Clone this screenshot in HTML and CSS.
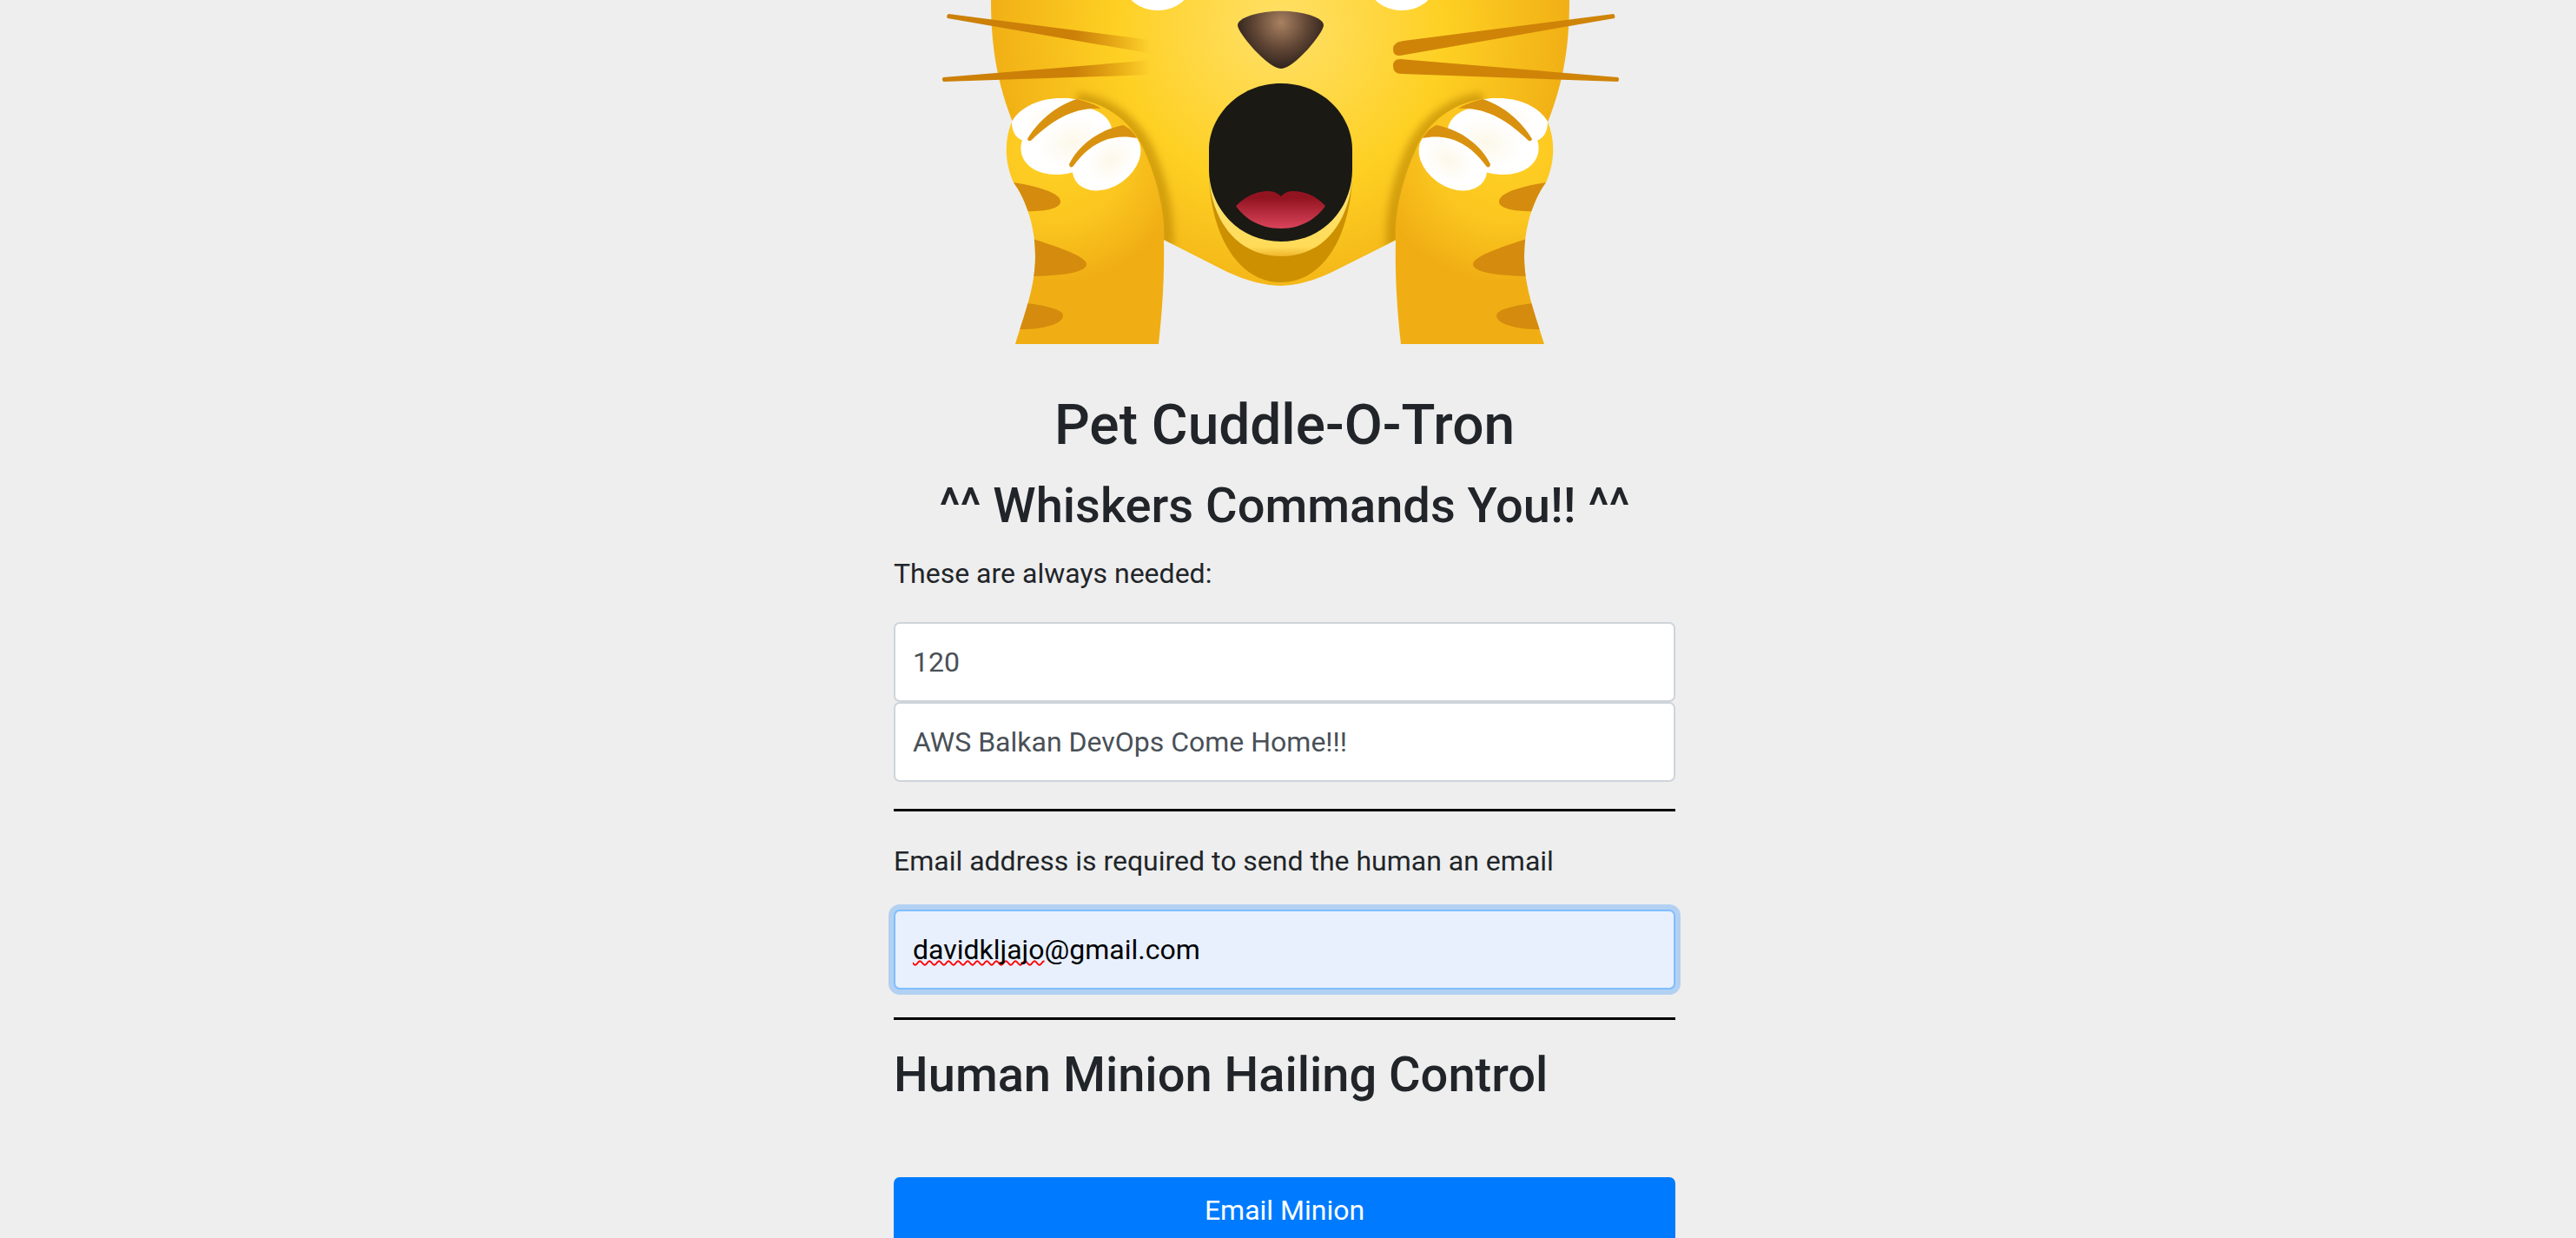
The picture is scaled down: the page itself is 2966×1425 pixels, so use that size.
FILE: index.html
```html
<!DOCTYPE html>
<html lang="en">
<head>
<meta charset="utf-8">
<title>Pet Cuddle-O-Tron</title>
<link rel="stylesheet" href="styles.css">
</head>
<body>
<main class="page">
  <svg class="cat" viewBox="1029 0 900 396" aria-label="Shocked cat emoji">
    <defs>
      <radialGradient id="faceGrad" gradientUnits="userSpaceOnUse" cx="1474" cy="30" r="345">
        <stop offset="0" stop-color="#ffe068"/>
        <stop offset="0.55" stop-color="#fed023"/>
        <stop offset="1" stop-color="#f0ad14"/>
      </radialGradient>
      <radialGradient id="pawGrad" gradientUnits="userSpaceOnUse" cx="1215" cy="175" r="150">
        <stop offset="0" stop-color="#ffd126"/>
        <stop offset="0.55" stop-color="#fbc61f"/>
        <stop offset="1" stop-color="#f0ae14"/>
      </radialGradient>
      <radialGradient id="noseGrad" gradientUnits="userSpaceOnUse" cx="1475" cy="26" r="52">
        <stop offset="0" stop-color="#a98161"/>
        <stop offset="0.6" stop-color="#5f4534"/>
        <stop offset="1" stop-color="#33251e"/>
      </radialGradient>
      <radialGradient id="toeGrad" cx="0.55" cy="0.55" r="0.55">
        <stop offset="0" stop-color="#fdf8ea"/>
        <stop offset="0.7" stop-color="#ffffff"/>
      </radialGradient>
      <linearGradient id="tongueGrad" gradientUnits="userSpaceOnUse" x1="0" y1="228" x2="0" y2="263">
        <stop offset="0" stop-color="#931421"/>
        <stop offset="1" stop-color="#da445b"/>
      </linearGradient>
      <linearGradient id="lipGrad" gradientUnits="userSpaceOnUse" x1="0" y1="240" x2="0" y2="295">
        <stop offset="0" stop-color="#ffe068"/>
        <stop offset="0.8" stop-color="#ffdb58"/>
        <stop offset="1" stop-color="#eeb52a"/>
      </linearGradient>
      <linearGradient id="whiskerTop" gradientUnits="userSpaceOnUse" x1="1237" y1="0" x2="1325" y2="0">
        <stop offset="0" stop-color="#cc8008"/>
        <stop offset="1" stop-color="#cc8008" stop-opacity="0"/>
      </linearGradient>
      <filter id="soft" x="-30%" y="-30%" width="160%" height="160%">
        <feGaussianBlur stdDeviation="4"/>
      </filter>
      <clipPath id="faceClip">
        <path d="M1141,0 C1141,60 1150,105 1172,155 L1340,276 L1413,313 Q1445,328 1474,329 Q1503,328 1534,313 L1608,276 L1776,155 C1798,105 1807,60 1807,0 Z"/>
      </clipPath>
      <clipPath id="pawClip">
        <path d="M1169,396 C1180,360 1192,330 1192,295 C1192,255 1178,225 1167,210 C1158,190 1155,165 1165,140 C1180,120 1205,113 1226,113 C1265,113 1300,135 1316,170 C1332,205 1342,245 1340,276 C1341,320 1338,360 1334,396 Z"/>
      </clipPath>
      <g id="paw">
        <path class="paw-shadow" filter="url(#soft)" clip-path="url(#faceClip)" d="M1240,115 C1270,117 1302,137 1319,170 C1335,205 1345,245 1343,285"/>
        <path fill="url(#pawGrad)" d="M1169,396 C1180,360 1192,330 1192,295 C1192,255 1178,225 1167,210 C1158,190 1155,165 1165,140 C1180,120 1205,113 1226,113 C1265,113 1300,135 1316,170 C1332,205 1342,245 1340,276 C1341,320 1338,360 1334,396 Z"/>
        <g clip-path="url(#pawClip)" fill="#d58b0d">
          <path d="M1160,209 C1195,214 1221,222 1221,232 C1221,241 1200,244 1175,243 Z"/>
          <path d="M1180,272 C1215,283 1251,295 1251,304 C1251,313 1225,318 1180,318 Z"/>
          <path d="M1170,348 C1200,350 1224,356 1224,363 C1224,373 1200,380 1170,379 Z"/>
        </g>
        <path fill="url(#toeGrad)" d="M1165,140 C1175,122 1200,112 1225,113 C1236,113 1246,115 1252,120 L1205,150 C1197,160 1187,165 1178,162 C1168,158 1165,150 1165,140 Z"/>
        <ellipse cx="1228" cy="162" rx="54" ry="37" transform="rotate(-18 1228 162)" fill="url(#toeGrad)"/>
        <ellipse cx="1274" cy="184" rx="43" ry="31" transform="rotate(-35 1274 184)" fill="url(#toeGrad)"/>
        <path class="claw" d="M1183,160 C1195,140 1215,122 1240,114 C1252,117 1262,121 1268,125 C1235,123 1210,140 1188,161 Q1184,164 1183,160 Z"/>
        <path class="claw" d="M1231,189 C1240,170 1262,150 1293,144 C1300,147 1305,152 1309,159 C1285,154 1258,160 1236,191 Q1232,195 1231,189 Z"/>
      </g>
    </defs>

    <path fill="url(#faceGrad)" d="M1141,0 C1141,60 1150,105 1172,155 L1340,276 L1413,313 Q1445,328 1474,329 Q1503,328 1534,313 L1608,276 L1776,155 C1798,105 1807,60 1807,0 Z"/>
    <ellipse class="eye" cx="1333" cy="-18" rx="38" ry="30"/>
    <ellipse class="eye" cx="1614" cy="-18" rx="38" ry="30"/>

    <path fill="url(#whiskerTop)" d="M1092,16 L1333,47 L1333,63 L1091,21 Q1089,18 1092,16 Z"/>
    <path fill="url(#whiskerTop)" d="M1086,89 L1328,69 L1328,86 L1086,94 Q1084,91 1086,89 Z"/>
    <path class="whisker" d="M1858,16 L1616,47 Q1604,49 1604,56 Q1604,65 1612,64 L1859,21 Q1860,18 1858,16 Z"/>
    <path class="whisker" d="M1863,89 L1612,68 Q1604,68 1604,76 Q1604,85 1614,85 L1863,94 Q1865,91 1863,89 Z"/>

    <path fill="url(#noseGrad)" d="M1475,12.7 C1500,12.7 1524,20 1524,29 C1524,38 1490,79 1475,79 C1460,79 1425,38 1425,29 C1425,20 1450,12.7 1475,12.7 Z"/>

    <path class="jaw" d="M1392,205 C1395,270 1425,325 1475,325 C1525,325 1554,270 1557,205 Z"/>
    <path fill="url(#lipGrad)" d="M1392,205 C1396,255 1425,295 1475,295 C1525,295 1553,255 1557,205 Z"/>
    <path class="mouth" d="M1475,96 C1525,96 1557,135 1557,172 L1557,195 C1557,238 1525,278 1475,278 C1425,278 1392,238 1392,195 L1392,172 C1392,135 1425,96 1475,96 Z"/>
    <path fill="url(#tongueGrad)" d="M1423,237 C1435,225 1448,220 1460,220 C1467,220 1472,223 1475,226 C1478,223 1482,220 1488,220 C1502,220 1515,225 1526,237 C1515,253 1497,263 1475,263 C1452,263 1434,253 1423,237 Z"/>

    <use href="#paw"/>
    <use href="#paw" transform="translate(2947 0) scale(-1 1)"/>
  </svg>

  <h1 class="title">Pet Cuddle-O-Tron</h1>
  <h2 class="subtitle">^^ Whiskers Commands You!! ^^</h2>
  <p class="note note-first">These are always needed:</p>
  <div class="field">120</div>
  <div class="field">AWS Balkan DevOps Come Home!!!</div>
  <hr class="rule rule-first">
  <p class="note note-email">Email address is required to send the human an email</p>
  <div class="field field-active"><span class="misspelled">davidkljajo</span>@gmail.com</div>
  <hr class="rule rule-second">
  <h2 class="section-title">Human Minion Hailing Control</h2>
  <button class="action" type="button">Email Minion</button>
</main>
</body>
</html>
```
FILE: styles.css
```css
html, body {
  margin: 0;
  height: 100%;
  overflow: hidden;
  background: #eeeeee;
}

body {
  font-family: Roboto, "Liberation Sans", sans-serif;
  color: #212529;
}

.page {
  width: 900px;
  margin-left: 1029px;
  display: flex;
  flex-direction: column;
}

.cat {
  display: block;
  flex: none;
  width: 900px;
  height: 396px;
  overflow: visible;
}

.eye { fill: #ffffff; }
.whisker { fill: #cf8408; }
.jaw { fill: #cc9000; }
.mouth { fill: #1a1914; }
.claw { fill: #d9920f; }
.paw-shadow {
  fill: none;
  stroke: #b98500;
  stroke-width: 16;
  opacity: 0.6;
}

.title, .subtitle, .section-title {
  font-weight: 500;
  margin: 0;
  line-height: 1.2;
}

.title {
  font-size: 64px;
  margin-top: 56px;
  text-align: center;
}

.subtitle {
  font-size: 56px;
  margin-top: 20px;
  text-align: center;
}

.section-title {
  font-size: 56px;
  margin-top: 30px;
}

.note {
  margin: 0;
  font-size: 32px;
  line-height: 48px;
  color: #212529;
}

.note-first { margin-top: 20px; margin-bottom: 32px; }
.note-email { margin-top: 33px; margin-bottom: 32px; }

.field {
  box-sizing: border-box;
  flex: none;
  height: 92px;
  padding: 0 20px;
  display: flex;
  align-items: center;
  white-space: pre;
  background: #ffffff;
  border: 2px solid #ced4da;
  border-radius: 7px;
  font-size: 32px;
  color: #495057;
}

.field-active {
  background: #e8f0fe;
  border-color: #80bdff;
  box-shadow: 0 0 0 6px rgba(0, 123, 255, 0.25);
  color: #000000;
}

.misspelled {
  text-decoration: underline wavy #ff0000 2px;
  text-underline-offset: 1px;
  text-decoration-skip-ink: none;
}

.rule {
  flex: none;
  width: 100%;
  height: 3px;
  margin: 0;
  border: 0;
  background: #000000;
}

.rule-first { margin-top: 31px; }
.rule-second { margin-top: 32px; }

.action {
  display: block;
  flex: none;
  width: 100%;
  height: 76px;
  margin-top: 84px;
  border: 0;
  border-radius: 7px;
  background: #007bff;
  color: #ffffff;
  font-family: inherit;
  font-size: 32px;
  text-align: center;
}
```
